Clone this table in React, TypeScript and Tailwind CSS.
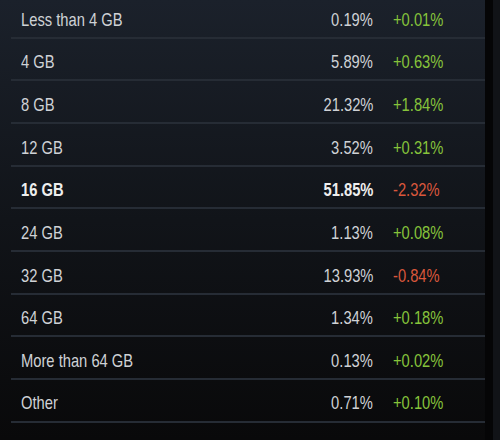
import React from 'react';

type Row = { label: string; pct: string; change: string; bold?: boolean };

const rows: Row[] = [
    { label: 'Less than 4 GB', pct: '0.19%', change: '+0.01%' },
    { label: '4 GB', pct: '5.89%', change: '+0.63%' },
    { label: '8 GB', pct: '21.32%', change: '+1.84%' },
    { label: '12 GB', pct: '3.52%', change: '+0.31%' },
    { label: '16 GB', pct: '51.85%', change: '-2.32%', bold: true },
    { label: '24 GB', pct: '1.13%', change: '+0.08%' },
    { label: '32 GB', pct: '13.93%', change: '-0.84%' },
    { label: '64 GB', pct: '1.34%', change: '+0.18%' },
    { label: 'More than 64 GB', pct: '0.13%', change: '+0.02%' },
    { label: 'Other', pct: '0.71%', change: '+0.10%' },
];

// the survey text is a tall, narrow Arial; squeeze Liberation Sans to match
const App: React.FC = () => {
    return (
        <div className="flex w-[500px] h-[440px] overflow-hidden text-[19px] font-['Liberation_Sans',Arial,sans-serif]">
            <div className="w-[485px] h-full bg-linear-to-b from-[#1b212b] via-[#111419] to-[#09090a]">
                <div className="-mt-[4px] ml-[11px]">
                    {rows.map(r => (
                        <div
                            key={r.label}
                            className={`flex items-center h-[42.67px] pt-[7px] border-b-2 border-[#262c35] ${r.bold ? 'font-bold text-[#eeeeee]' : 'text-[#cfd2d6]'}`}
                        >
                            <div className="flex-1 pl-[10px]">
                                <span className="inline-block origin-left scale-x-[0.775] whitespace-nowrap">{r.label}</span>
                            </div>
                            <div className="w-[80px] flex justify-end">
                                <span className="inline-block origin-right scale-x-[0.775] whitespace-nowrap">{r.pct}</span>
                            </div>
                            <div className="ml-[20px] w-[92px] font-normal">
                                <span
                                    className={`inline-block origin-left scale-x-[0.775] whitespace-nowrap ${r.change.startsWith('-') ? 'text-[#d9573c]' : 'text-[#86c33b]'}`}
                                >
                                    {r.change}
                                </span>
                            </div>
                        </div>
                    ))}
                </div>
            </div>
            <div className="w-[8px] h-full bg-[#050506]" />
            <div className="w-[7px] h-full bg-[#111317]" />
        </div>
    );
};

export default App;
